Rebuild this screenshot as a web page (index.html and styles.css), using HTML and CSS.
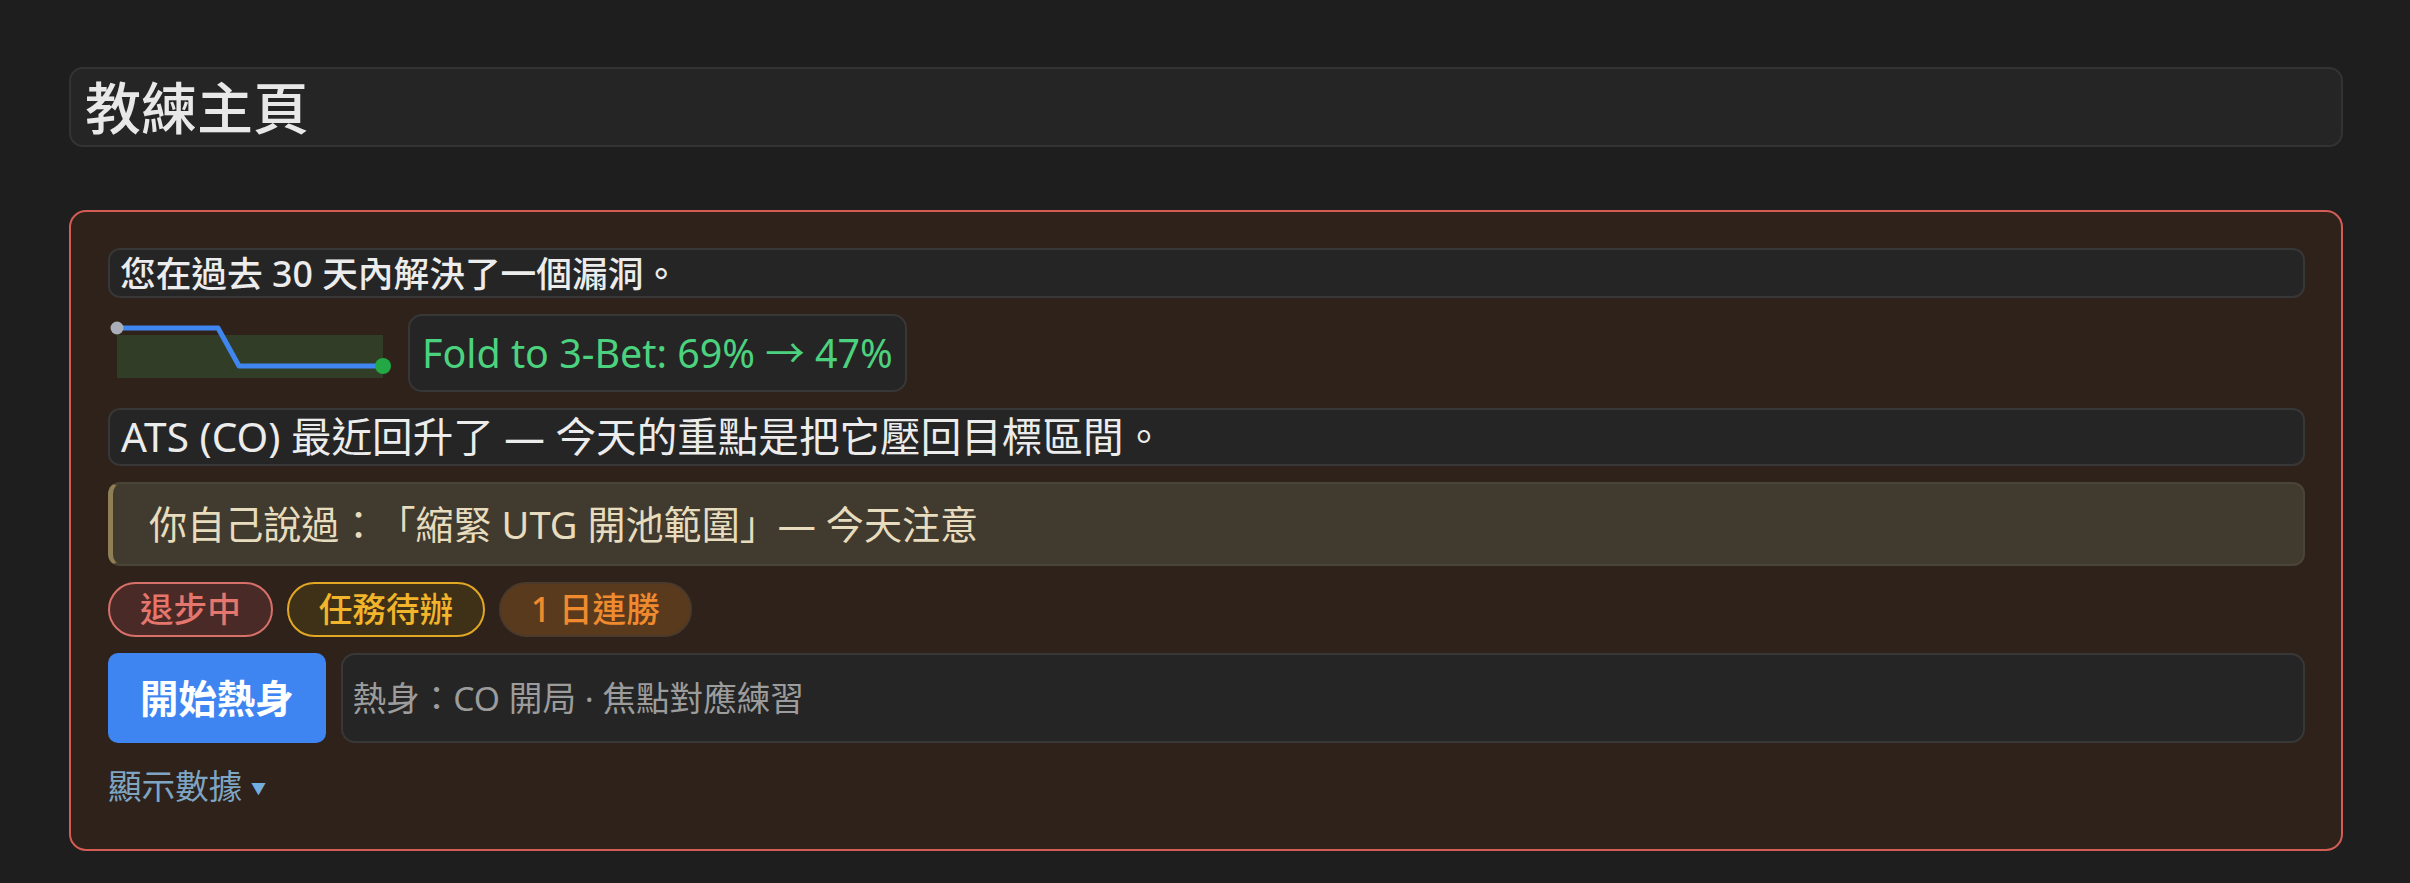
FILE: index.html
```html
<!DOCTYPE html>
<html lang="zh-Hant">

<head>
  <meta charset="UTF-8">
  <meta name="viewport" content="width=device-width, initial-scale=1.0">
  <title>教練主頁</title>
  <link rel="stylesheet" href="styles.css">
</head>

<body>

  <div id="page">
    <h1 id="title">教練主頁</h1>

    <div id="coachCard">
      <div class="line strong">您在過去 30 天內解決了一個漏洞。</div>

      <div id="trendRow">
        <svg class="spark" width="290" height="70" viewBox="0 0 290 70">
          <rect x="9" y="17" width="266" height="43" fill="#313d26"></rect>
          <polyline points="9,10 110,10 131,48 275,48" fill="none" stroke="#3f86f0" stroke-width="5" stroke-linejoin="round"></polyline>
          <circle cx="9" cy="10" r="6.5" fill="#a9aeb8"></circle>
          <circle cx="275" cy="48" r="8" fill="#22a845"></circle>
        </svg>
        <div class="statBox">Fold to 3-Bet: 69% → 47%</div>
      </div>

      <div class="line big">ATS (CO) 最近回升了 — 今天的重點是把它壓回目標區間。</div>

      <div class="quote">你自己說過：「縮緊 UTG 開池範圍」— 今天注意</div>

      <div class="badges">
        <span class="badge red">退步中</span>
        <span class="badge gold">任務待辦</span>
        <span class="badge orange">1 日連勝</span>
      </div>

      <div class="actionRow">
        <button id="warmupBtn">開始熱身</button>
        <input type="text" id="warmupInput" placeholder="熱身：CO 開局 · 焦點對應練習">
      </div>

      <div class="toggle">顯示數據 <span class="arrow">▼</span></div>
    </div>
  </div>

</body>

</html>
```

FILE: styles.css
```css
body {
  margin: 0;
  background-color: #1e1e1e;
  color: #e6e6e6;
  font-family: "Noto Sans", "Noto Sans CJK TC", sans-serif;
  text-spacing-trim: space-all;
}

#page {
  padding: 67px 67px 30px 69px;
}

#title {
  margin: 0;
  background-color: #252525;
  border: 2px solid #333333;
  border-radius: 14px;
  padding: 5px 14px;
  font-size: 56px;
  line-height: 66px;
  font-weight: 500;
  color: #e8e8e8;
}

#coachCard {
  margin-top: 63px;
  background-color: #2f221a;
  border: 2px solid #d35c55;
  border-radius: 17px;
  padding: 36px 36px 38px 37px;
  display: flex;
  flex-direction: column;
  gap: 16px;
}

.line {
  background-color: #252525;
  border: 2px solid #373737;
  border-radius: 12px;
  padding: 4px 12px;
  font-size: 38.4px;
  line-height: 46px;
  color: #ececec;
}

.line.big {
  font-size: 40.6px;
  padding: 4px 11px;
}

.line.strong {
  padding: 2px 10px;
  font-size: 35.7px;
  line-height: 42px;
  font-weight: 500;
}

#trendRow {
  display: flex;
  align-items: center;
  gap: 10px;
}

.statBox {
  background-color: #252525;
  border: 2px solid #373737;
  border-radius: 14px;
  padding: 12px 12px;
  font-size: 39.4px;
  line-height: 50px;
  color: #4cd27e;
}

.quote {
  background-color: #403b2e;
  border: 2px solid #4a4536;
  border-left: 5px solid #8e7f55;
  border-radius: 12px;
  padding: 17px 36px;
  font-size: 38.1px;
  line-height: 46px;
  color: #e8dcbf;
}

.badges {
  display: flex;
  gap: 14px;
}

.badge {
  border: 2px solid;
  border-radius: 28px;
  padding: 5px 30px;
  font-size: 33.6px;
  line-height: 41px;
  font-weight: 500;
}

.badge.red {
  background-color: #4a2a26;
  border-color: #d8706a;
  color: #e5766d;
}

.badge.gold {
  background-color: #3e3117;
  border-color: #e3a823;
  color: #f1b42a;
}

.badge.orange {
  background-color: #5a3a1d;
  border-color: #4b3a2c;
  color: #f08a2e;
}

.actionRow {
  display: flex;
  gap: 15px;
}

#warmupBtn {
  background-color: #3e85f2;
  border: none;
  border-radius: 10px;
  padding: 22px 32px;
  font-family: inherit;
  font-size: 38.4px;
  line-height: 46px;
  font-weight: 700;
  color: #ffffff;
}

#warmupInput {
  flex: 1;
  background-color: #252525;
  border: 2px solid #383838;
  border-radius: 14px;
  padding: 0 10px;
  font-family: inherit;
  font-size: 33.6px;
  color: #e6e6e6;
}

#warmupInput::placeholder {
  color: #9c9c9c;
}

.toggle {
  margin-top: 4px;
  font-size: 33.6px;
  line-height: 46px;
  color: #7ea6c4;
}

.arrow {
  font-size: 15px;
  color: #72afe0;
  vertical-align: 5px;
}
```
